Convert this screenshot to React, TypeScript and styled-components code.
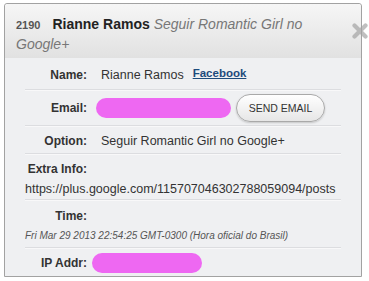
import styled, { createGlobalStyle } from "styled-components";

const GlobalStyle = createGlobalStyle`
  body {
    margin: 0;
    background: #fff;
    font-family: "Liberation Sans", Arial, sans-serif;
    color: #333;
  }
`;

export default function App() {
  return (
    <>
      <GlobalStyle />
      <StyledPanel>
        <StyledHeader>
          <StyledId>2190</StyledId>
          <StyledName>Rianne Ramos</StyledName>{" "}
          <StyledSubject>Seguir Romantic Girl no Google+</StyledSubject>
        </StyledHeader>
        <StyledClose aria-label="close">
          <svg width="16" height="16" viewBox="0 0 16 16">
            <path
              d="M2.5 2.5 L13.5 13.5 M13.5 2.5 L2.5 13.5"
              stroke="#a4a4a4"
              strokeWidth="4.2"
              strokeLinecap="round"
            />
          </svg>
        </StyledClose>
        <StyledBody>
          <StyledRow>
            <StyledLabel>Name:</StyledLabel>
            <StyledValue>
              Rianne Ramos
              <StyledLink href="#">Facebook</StyledLink>
            </StyledValue>
          </StyledRow>
          <StyledRow $pad="4px 0 3px">
            <StyledLabel>Email:</StyledLabel>
            <StyledValue>
              <StyledRedacted $width={135} $shift={-5} />
              <StyledButton>SEND EMAIL</StyledButton>
            </StyledValue>
          </StyledRow>
          <StyledRow>
            <StyledLabel>Option:</StyledLabel>
            <StyledValue>Seguir Romantic Girl no Google+</StyledValue>
          </StyledRow>
          <StyledRow $stacked $pad="7px 0 2px">
            <StyledLabel>Extra Info:</StyledLabel>
            <StyledBlockValue>
              https://plus.google.com/115707046302788059094/posts
            </StyledBlockValue>
          </StyledRow>
          <StyledRow $stacked $pad="8px 0 4px">
            <StyledLabel>Time:</StyledLabel>
            <StyledTime>
              Fri Mar 29 2013 22:54:25 GMT-0300 (Hora oficial do Brasil)
            </StyledTime>
          </StyledRow>
          <StyledRow $pad="5px 0 3px" $last>
            <StyledLabel>IP Addr:</StyledLabel>
            <StyledValue>
              <StyledRedacted $width={110} $shift={-9} />
            </StyledValue>
          </StyledRow>
        </StyledBody>
      </StyledPanel>
    </>
  );
}

const StyledPanel = styled.div`
  position: relative;
  margin: 3px 0 0 4px;
  width: 356px;
  border: 1px solid #a2a2a2;
  border-radius: 3px 3px 0 0;
`;

const StyledHeader = styled.div`
  padding: 11px 30px 5px 11px;
  height: 38px;
  line-height: 19px;
  font-size: 14px;
  background: linear-gradient(#f6f6f6, #e1e1e1);
  border-radius: 3px 3px 0 0;
`;

const StyledId = styled.span`
  font-size: 11px;
  font-weight: bold;
  color: #555;
  margin-right: 12px;
`;

const StyledName = styled.span`
  font-weight: bold;
  color: #222;
`;

const StyledSubject = styled.span`
  font-style: italic;
  color: #777;
`;

const StyledClose = styled.div`
  position: absolute;
  left: 347px;
  top: 19px;
  width: 16px;
  height: 16px;
  opacity: 0.7;
`;

const StyledBody = styled.div`
  background: #eff0f2;
  padding: 0 20px;
`;

const StyledRow = styled.div<{ $stacked?: boolean; $pad?: string; $last?: boolean }>`
  display: flex;
  flex-direction: ${(p) => (p.$stacked ? "column" : "row")};
  align-items: ${(p) => (p.$stacked ? "flex-start" : "center")};
  padding: ${(p) => p.$pad || "7px 0 4px"};
  line-height: 16px;
  border-bottom: ${(p) => (p.$last ? "0" : "1px solid #dcdde0")};
  box-shadow: ${(p) => (p.$last ? "none" : "0 1px 0 #f8f8f9")};
`;

const StyledLabel = styled.div`
  width: 62px;
  flex-shrink: 0;
  text-align: right;
  font-size: 12px;
  font-weight: bold;
  color: #333;
  white-space: nowrap;
`;

const StyledValue = styled.div`
  display: flex;
  align-items: center;
  margin-left: 14px;
  font-size: 12.5px;
  color: #333;
`;

const StyledBlockValue = styled.div`
  margin-top: 4px;
  font-size: 12.5px;
  color: #333;
  white-space: nowrap;
`;

const StyledTime = styled.div`
  margin-top: 5px;
  line-height: 14px;
  font-size: 10px;
  font-style: italic;
  color: #555;
  white-space: nowrap;
`;

const StyledLink = styled.a`
  margin-left: 9px;
  margin-bottom: 4px;
  font-size: 11.5px;
  font-weight: bold;
  color: #1d4b7c;
  text-decoration: underline;
`;

const StyledRedacted = styled.span<{ $width: number; $shift: number }>`
  display: block;
  width: ${(p) => p.$width}px;
  height: 20px;
  margin-left: ${(p) => p.$shift}px;
  border-radius: 10px;
  background: #ee68f2;
`;

const StyledButton = styled.button`
  width: 89px;
  height: 28px;
  margin-left: 5px;
  padding: 0;
  border: 1px solid #a9a9a9;
  border-radius: 14px;
  background: linear-gradient(#ffffff, #e6e6e6);
  box-shadow: 0 1px 2px rgba(0, 0, 0, 0.18);
  font-family: "Liberation Sans", Arial, sans-serif;
  font-size: 10.5px;
  color: #333;
`;
